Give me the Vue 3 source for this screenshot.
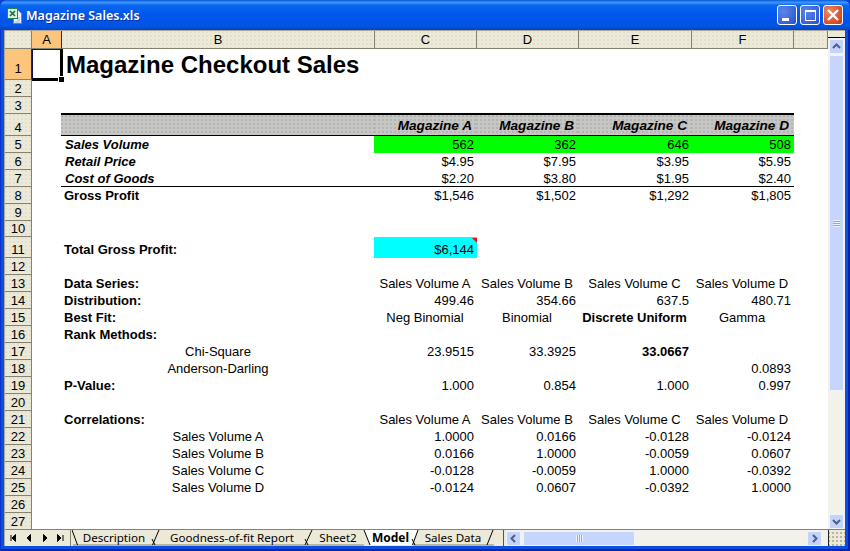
<script setup>
const cols = ['A', 'B', 'C', 'D', 'E', 'F', '']
const L = 'l', C = 'c', R = 'r'
const cell = (t, align = R, cls = '') => ({ t, align, cls })
const nums = (...v) => v.map((t) => cell(t))
const series = ['Sales Volume A', 'Sales Volume B', 'Sales Volume C', 'Sales Volume D'].map((t) => cell(t, C))
const label = (t, cls = 'b') => cell(t, L, cls)
const mid = (t) => cell(t, C)

const rows = [
  { n: 1, h: 31, title: true },
  { n: 2, h: 17 },
  { n: 3, h: 17 },
  { n: 4, h: 22, cls: 'band', b: cell('', L), v: ['Magazine A', 'Magazine B', 'Magazine C', 'Magazine D'].map((t) => cell(t, R, 'bi')) },
  { n: 5, h: 17, cls: 'green', b: label('Sales Volume', 'bi'), v: nums('562', '362', '646', '508') },
  { n: 6, h: 17, b: label('Retail Price', 'bi'), v: nums('$4.95', '$7.95', '$3.95', '$5.95') },
  { n: 7, h: 17, cls: 'under', b: label('Cost of Goods', 'bi'), v: nums('$2.20', '$3.80', '$1.95', '$2.40') },
  { n: 8, h: 17, b: label('Gross Profit'), v: nums('$1,546', '$1,502', '$1,292', '$1,805') },
  { n: 9, h: 17 },
  { n: 10, h: 16 },
  { n: 11, h: 21, b: label('Total Gross Profit:'), v: [cell('$6,144', R, 'cyan')] },
  { n: 12, h: 17 },
  { n: 13, h: 17, b: label('Data Series:'), v: series },
  { n: 14, h: 17, b: label('Distribution:'), v: nums('499.46', '354.66', '637.5', '480.71') },
  { n: 15, h: 17, b: label('Best Fit:'), v: [mid('Neg Binomial'), mid('Binomial'), cell('Discrete Uniform', C, 'b'), mid('Gamma')] },
  { n: 16, h: 17, b: label('Rank Methods:') },
  { n: 17, h: 17, b: mid('Chi-Square'), v: [cell('23.9515'), cell('33.3925'), cell('33.0667', R, 'b'), cell('')] },
  { n: 18, h: 17, b: mid('Anderson-Darling'), v: nums('', '', '', '0.0893') },
  { n: 19, h: 17, b: label('P-Value:'), v: nums('1.000', '0.854', '1.000', '0.997') },
  { n: 20, h: 17 },
  { n: 21, h: 17, b: label('Correlations:'), v: series },
  { n: 22, h: 17, b: mid('Sales Volume A'), v: nums('1.0000', '0.0166', '-0.0128', '-0.0124') },
  { n: 23, h: 17, b: mid('Sales Volume B'), v: nums('0.0166', '1.0000', '-0.0059', '0.0607') },
  { n: 24, h: 17, b: mid('Sales Volume C'), v: nums('-0.0128', '-0.0059', '1.0000', '-0.0392') },
  { n: 25, h: 17, b: mid('Sales Volume D'), v: nums('-0.0124', '0.0607', '-0.0392', '1.0000') },
  { n: 26, h: 17 },
  { n: 27, h: 17 }
]
const navs = [
  'M5.500 3v6M10 2.500v7L6.500 6z',
  'M9 2.500v7L5.500 6z',
  'M6 2.500v7L9.500 6z',
  'M4 2.500v7L7.500 6zM9.500 3v6'
]
const tabs = [
  { t: 'Description', w: 84 },
  { t: 'Goodness-of-fit Report', w: 152 },
  { t: 'Sheet2', w: 60 },
  { t: 'Model', w: 45, active: true },
  { t: 'Sales Data', w: 80 }
]
</script>

<template>
  <div class="window">
    <header class="titlebar">
      <svg class="xl" width="16" height="16" viewBox="0 0 16 16">
        <path d="M7.500 2.500h5l3 3v10h-8z" fill="#eef2fb" stroke="#6f80a8" />
        <path d="M11 10h3M11 12h3M9 14h5" stroke="#9fb0d4" />
        <rect x="1.500" y="0.500" width="10" height="10" fill="#dff0e0" stroke="#1b8a52" />
        <path d="M4 3l5 5M9 3L4 8" stroke="#14703f" stroke-width="1.600" />
      </svg>
      <span class="caption">Magazine Sales.xls</span>
      <div class="controls">
        <button class="ctl"><i class="min"></i></button>
        <button class="ctl"><i class="max"></i></button>
        <button class="ctl close">
          <svg width="14" height="14" viewBox="0 0 14 14"><path d="M2 2l10 10M12 2L2 12" stroke="#fff" stroke-width="2.400" /></svg>
        </button>
      </div>
    </header>

    <div class="client">
      <div class="work">
        <div class="sheet">
          <div class="row head">
            <div class="rh corner"></div>
            <div v-for="(c, i) in cols" :key="i" class="ch" :class="{ on: c === 'A' }">{{ c }}</div>
          </div>
          <div v-for="r in rows" :key="r.n" class="row" :class="r.cls" :style="{ height: r.h + 'px' }">
            <div class="rh" :class="{ on: r.n === 1 }">{{ r.n }}</div>
            <div class="c a"></div>
            <div class="c bcol" :class="r.b && ['al-' + r.b.align, r.b.cls]">
              <span v-if="r.title" class="title">Magazine Checkout Sales</span>
              <template v-else-if="r.b">{{ r.b.t }}</template>
            </div>
            <div
              v-for="k in 4"
              :key="k"
              class="c val"
              :class="r.v && r.v[k - 1] && ['al-' + r.v[k - 1].align, r.v[k - 1].cls]"
            >{{ r.v && r.v[k - 1] ? r.v[k - 1].t : '' }}</div>
            <div class="c g"></div>
          </div>
          <div class="selection"><i></i></div>
        </div>

        <aside class="vscroll">
          <div class="vsplit"></div>
          <button class="sbtn">
            <svg width="9" height="7" viewBox="0 0 9 7"><path d="M1 5l3.500-3.500L8 5" fill="none" stroke="#4d6185" stroke-width="2" /></svg>
          </button>
          <div class="vtrack">
            <div class="vthumb"><i></i></div>
          </div>
          <button class="sbtn">
            <svg width="9" height="7" viewBox="0 0 9 7"><path d="M1 2l3.500 3.500L8 2" fill="none" stroke="#4d6185" stroke-width="2" /></svg>
          </button>
        </aside>
      </div>

      <footer class="tabbar">
        <div class="navs">
          <svg v-for="(d, i) in navs" :key="i" width="16" height="13" viewBox="0 0 15 13"><path :d="d" fill="#000" stroke="#000" stroke-width="1" /></svg>
        </div>
        <div class="tabs">
          <svg class="tabshapes" width="431" height="16" viewBox="0 0 431 16">
            <path d="M292 0h54l-5 15h-43z" fill="#fff" />
            <path d="M1 15h291M341 15h81" stroke="#85836f" fill="none" />
            <path d="M0 0l5.500 15M87 0l-6.500 15M80 9l3 6M240 0l-7 15M233 9l3 6M292 0l6 15M346 0l-5.500 15M340 9l3 6M421 0l-6 15" stroke="#000" fill="none" />
          </svg>
          <div v-for="t in tabs" :key="t.t" class="tab" :class="{ active: t.active }" :style="{ width: t.w + 'px' }">
            <span>{{ t.t }}</span>
          </div>
        </div>
        <div class="tsplit"></div>
        <div class="hscroll">
          <button class="sbtn">
            <svg width="7" height="9" viewBox="0 0 7 9"><path d="M5 1L1.500 4.500 5 8" fill="none" stroke="#4d6185" stroke-width="2" /></svg>
          </button>
          <div class="htrack">
            <div class="hthumb"><i></i></div>
          </div>
          <button class="sbtn">
            <svg width="7" height="9" viewBox="0 0 7 9"><path d="M2 1l3.500 3.500L2 8" fill="none" stroke="#4d6185" stroke-width="2" /></svg>
          </button>
        </div>
        <div class="grip"></div>
      </footer>
    </div>
  </div>
</template>

<style>
html, body { margin: 0; background: #0a3fd0; }
</style>

<style scoped>
.window {
  width: 850px;
  height: 551px;
  display: flex;
  flex-direction: column;
  overflow: hidden;
  border-radius: 7px 7px 0 0;
  background: #0c4ee0;
  box-shadow: inset 1px 0 0 #0733c8, inset -2px 0 0 #0624b0, inset 0 -2px 0 #0624b0;
  font-family: "Liberation Sans", Arial, sans-serif;
  font-size: 13px;
  color: #000;
}
.titlebar {
  height: 30px;
  flex: none;
  display: flex;
  align-items: center;
  padding: 0 7px 0 6px;
  box-sizing: border-box;
  background: linear-gradient(180deg, #0a5ad8 0%, #3d95ff 8%, #0a66f0 18%, #0058ee 45%, #0055e5 85%, #0046c8 100%);
}
.xl { margin-right: 4px; margin-top: 1px; }
.caption {
  font-family: "Noto Sans", sans-serif;
  font-weight: 600;
  font-size: 12.5px;
  color: #fff;
  text-shadow: 1px 1px 0 #0f2fa0;
}
.controls { margin-left: auto; display: flex; gap: 3px; }
.ctl {
  width: 20px;
  height: 20px;
  padding: 0;
  border: 1px solid #fff;
  border-radius: 3px;
  box-sizing: border-box;
  background: radial-gradient(circle at 30% 30%, #5b86ea 0%, #3a66dd 60%, #2a4fc7 100%);
  position: relative;
  display: flex;
  align-items: center;
  justify-content: center;
}
.close { background: radial-gradient(circle at 30% 30%, #ea8a68 0%, #e0532f 60%, #c63a18 100%); }
.min { position: absolute; left: 4px; bottom: 3px; width: 7px; height: 3px; background: #fff; }
.max { width: 11px; height: 11px; box-sizing: border-box; border: 1px solid #fff; border-top-width: 2px; }

.client {
  flex: 1;
  margin: 0 5px 5px 4px;
  min-height: 0;
  display: flex;
  flex-direction: column;
  background: #ece9d8;
  border-top: 1px solid #aca899;
  border-left: 1px solid #aca899;
}
.work { flex: 1; min-height: 0; display: flex; }
.sheet { position: relative; width: 823px; background: #fff; overflow: hidden; }
.row {
  display: grid;
  grid-template-columns: 27px 30px 312px 102px 102px 113px 102px 35px;
  height: 17px;
}
.row.head {
  height: 18px;
  grid-template-columns: 27px 30px 313px 102px 102px 113px 102px 34px;
}
.rh, .ch {
  background-color: #ece9d8;
  background-image: radial-gradient(circle at 1px 1px, #e2dfcc 0.8px, transparent 1px);
  background-size: 4px 4px;
  box-sizing: border-box;
  border-right: 1px solid #85836f;
  border-bottom: 1px solid #85836f;
  display: flex;
  align-items: flex-end;
  justify-content: center;
  line-height: 15px;
  font-size: 13px;
}
.ch { align-items: center; }
.rh.on, .ch.on {
  background: #fdc57c;
}
.rh.on { border-color: transparent #1c2a78 #85836f transparent; padding-bottom: 3px; }
.ch.on { border-color: #85836f #1c2a78 #85836f transparent; }
.c {
  padding: 0 2px 1px 2px;
  white-space: nowrap;
  line-height: 15px;
  display: flex;
  align-items: flex-end;
  min-width: 0;
  box-sizing: border-box;
}
.val { margin-right: -1px; padding-right: 3px; }
.al-l { justify-content: flex-start; }
.al-c { justify-content: center; }
.al-r { justify-content: flex-end; }
.b { font-weight: 700; }
.bi { font-weight: 700; font-style: italic; }
.bcol.bi { padding-left: 3px; }
.bcol { overflow: visible; }
.title {
  font-size: 24px;
  font-weight: 700;
  line-height: 28px;
  margin-left: 2px;
}
.band .bcol, .band .val {
  background-color: #c6c6c2;
  background-image: radial-gradient(circle at 1px 1px, #b2b4b6 0.8px, transparent 1px);
  background-size: 4px 4px;
  border-top: 2px solid #000;
  border-bottom: 1px solid #000;
  margin-top: -1px;
  padding-bottom: 2px;
  padding-right: 5px;
  font-size: 13.6px;
}
.band .bcol, .under .bcol { margin-left: -1px; }
.under .bcol.bi { padding-left: 4px; }
.green .val { background: #0f0; }
.under .bcol, .under .val { border-bottom: 1px solid #000; padding-bottom: 0; }
.cyan { background: #0ff; position: relative; }
.cyan::after {
  content: "";
  position: absolute;
  top: 1px;
  right: 0;
  border-style: solid;
  border-width: 0 5px 5px 0;
  border-color: transparent #f01010 transparent transparent;
}
.selection {
  position: absolute;
  left: 27px;
  top: 18px;
  width: 31px;
  height: 32px;
  box-sizing: border-box;
  border: 1px solid #0a1560;
  border-right: 3px solid #000;
  border-bottom: 3px solid #000;
}
.selection i {
  position: absolute;
  right: -4px;
  bottom: -4px;
  width: 5px;
  height: 5px;
  background: #000;
  box-shadow: 0 0 0 1px #fff;
}

.vscroll {
  width: 17px;
  flex: none;
  display: flex;
  flex-direction: column;
  align-items: center;
  background: #f3f2ea;
  box-sizing: border-box;
}
.vsplit {
  width: 100%;
  height: 7px;
  flex: none;
  margin-bottom: 1px;
  box-sizing: border-box;
  background: #ece9d8;
  border-bottom: 1px solid #000;
}
.sbtn {
  width: 15px;
  height: 15px;
  flex: none;
  padding: 0;
  box-sizing: border-box;
  border: 1px solid #eef3fe;
  border-radius: 2px;
  background: #c3d3fb;
  display: flex;
  align-items: center;
  justify-content: center;
}
.vtrack { flex: 1; width: 100%; min-height: 0; padding: 1px 1px; box-sizing: border-box; }
.vthumb {
  height: 336px;
  box-sizing: border-box;
  border: 1px solid #eef3fe;
  border-radius: 2px;
  background: #c5d5fc;
  display: flex;
  align-items: center;
  justify-content: center;
}
.vthumb i {
  width: 7px;
  height: 7px;
  background: repeating-linear-gradient(180deg, #eef3fe 0 1px, #8ea6e8 1px 2px);
}

.tabbar {
  height: 17px;
  flex: none;
  display: flex;
  align-items: stretch;
  border-top: 1px solid #85836f;
  box-sizing: border-box;
  background-color: #ece9d8;
}
.navs {
  width: 65px;
  flex: none;
  display: flex;
  align-items: center;
  border-right: 1px solid #85836f;
  margin-right: 1px;
  box-sizing: content-box;
}
.navs svg { flex: none; }
.tabs { position: relative; width: 431px; flex: none; display: flex; }
.tabshapes { position: absolute; left: 0; top: 0; }
.tab {
  position: relative;
  flex: none;
  display: flex;
  align-items: center;
  justify-content: center;
  padding-bottom: 2px;
  box-sizing: border-box;
  font-family: "Noto Sans", sans-serif;
  font-size: 11.6px;
  color: #000;
}
.tab.active {
  font-weight: 700;
  font-size: 12px;
}
.tsplit { width: 2px; flex: none; border-left: 1px solid #555; }
.hscroll { flex: none; width: 322px; padding-right: 6px; box-sizing: border-box; display: flex; align-items: center; background: #f3f2ea; }
.htrack { flex: 1; height: 15px; min-width: 0; padding: 0 2px; box-sizing: border-box; }
.hthumb {
  width: 112px;
  height: 100%;
  box-sizing: border-box;
  border: 1px solid #eef3fe;
  border-radius: 2px;
  background: #c5d5fc;
  display: flex;
  align-items: center;
  justify-content: center;
}
.hthumb i {
  width: 7px;
  height: 7px;
  background: repeating-linear-gradient(90deg, #eef3fe 0 1px, #8ea6e8 1px 2px);
}
.grip {
  flex: 1;
  border-left: 1px solid #222;
  background-image: radial-gradient(circle at 1px 1px, #b8b4a0 1px, transparent 1.1px);
  background-size: 4px 4px;
  background-position: 3px 2px;
}
</style>
